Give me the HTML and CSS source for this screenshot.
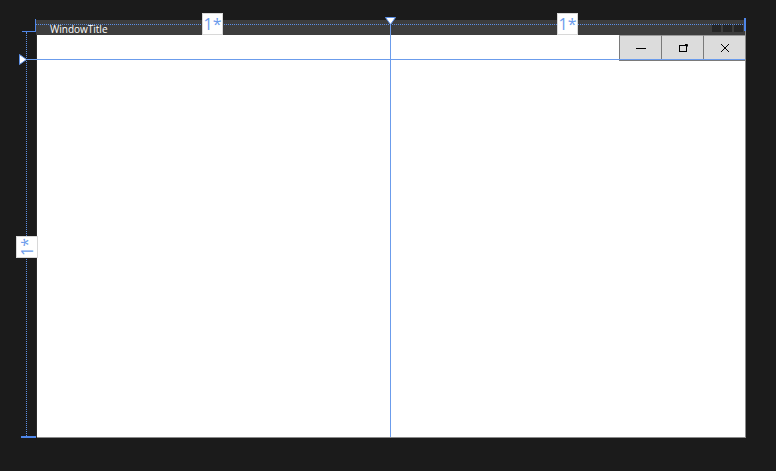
FILE: index.html
```html
<!DOCTYPE html>
<html>
  <head>
    <link rel="stylesheet" href="styles.css">
  </head>
  <body>
    <div class="surface">
      <div class="window">
        <div class="titlebar">
          <span class="title">WindowTitle</span>
          <div class="chrome-btns">
            <span></span><span></span><span></span>
          </div>
        </div>
        <div class="client">
          <div class="caption-btns">
            <div class="cbtn">
              <svg width="12" height="12" viewBox="0 0 12 12"><path d="M1 6.5h10" stroke="#000" stroke-width="1"/></svg>
            </div>
            <div class="cbtn">
              <svg width="12" height="12" viewBox="0 0 12 12"><rect x="2.5" y="3.5" width="7" height="6" fill="none" stroke="#000"/><path d="M8 2.5h2.5v2" fill="none" stroke="#000"/></svg>
            </div>
            <div class="cbtn">
              <svg width="12" height="12" viewBox="0 0 12 12"><path d="M2 2l8 8M10 2l-8 8" stroke="#000" stroke-width="1"/></svg>
            </div>
          </div>
        </div>
      </div>

      <!-- grid adorners -->
      <div class="rail-top"></div>
      <div class="rail-end"></div>
      <div class="rail-left"></div>
      <div class="tick-top"></div>
      <div class="tick-bottom"></div>
      <div class="corner"></div>
      <div class="col-line"></div>
      <div class="row-line"></div>
      <svg class="col-arrow" width="11" height="8" viewBox="0 0 11 8"><path d="M0.5 0.5h10L5.5 7.5z" fill="#fff" stroke="#5b8fe6"/></svg>
      <svg class="row-arrow" width="8" height="11" viewBox="0 0 8 11"><path d="M0.5 0.5v10L7.5 5.5z" fill="#fff" stroke="#5b8fe6"/></svg>
      <div class="size-tag col1">1*</div>
      <div class="size-tag col2">1*</div>
      <div class="size-tag row1"><span>1*</span></div>
    </div>
  </body>
</html>
```

FILE: styles.css
```css
html, body {
  margin: 0;
  padding: 0;
  background: #1b1b1b;
}

.surface {
  position: relative;
  width: 776px;
  height: 471px;
  overflow: hidden;
  padding: 20px 0 0 36px;
  box-sizing: border-box;
}

.window {
  width: 709px;
  height: 417px;
  display: flex;
  flex-direction: column;
  box-shadow: 1px 1px 0 #8a8a8a;
}

.titlebar {
  height: 15px;
  background: #3d3d3d;
  display: flex;
  align-items: flex-end;
  justify-content: space-between;
  font: 10px "Open Sans", "DejaVu Sans", sans-serif;
  color: #ffffff;
}

.title {
  padding-left: 14px;
  line-height: 12px;
}

.chrome-btns {
  display: flex;
  gap: 2px;
  padding: 0 2px 3px 0;
}

.chrome-btns span {
  width: 9px;
  height: 8px;
  background: #262626;
}

.client {
  flex: 1;
  background: #fff;
  border-left: 1px solid #2a2a2a;
  display: flex;
  justify-content: flex-end;
  align-items: flex-start;
}

.caption-btns {
  display: flex;
}

.cbtn {
  width: 41px;
  height: 24px;
  background: #dcdcdc;
  border: 1px solid #7a7a7a;
  border-top-color: #9a9a9a;
  display: flex;
  align-items: center;
  justify-content: center;
  margin-left: -1px;
}

.cbtn:last-child {
  border-right: none;
}

/* designer adorners */
.rail-top {
  position: absolute;
  left: 36px;
  top: 24px;
  width: 709px;
  border-top: 1px dotted #5b8fe6;
}

.rail-end {
  position: absolute;
  left: 744px;
  top: 18px;
  width: 2px;
  height: 13px;
  background: #4f86e8;
}

.corner {
  position: absolute;
  left: 35px;
  top: 19px;
  width: 1px;
  height: 12px;
  background: #4f86e8;
}

.tick-top {
  position: absolute;
  left: 22px;
  top: 31px;
  width: 14px;
  height: 1px;
  background: #4f86e8;
}

.tick-bottom {
  position: absolute;
  left: 21px;
  top: 436px;
  width: 15px;
  height: 2px;
  background: #4f86e8;
}

.rail-left {
  position: absolute;
  left: 26px;
  top: 32px;
  height: 404px;
  border-left: 1px dotted #5b8fe6;
}

.col-line {
  position: absolute;
  left: 390px;
  top: 22px;
  width: 1px;
  height: 415px;
  background: #6b9cec;
}

.row-line {
  position: absolute;
  left: 27px;
  top: 59px;
  width: 718px;
  height: 1px;
  background: #6b9cec;
}

.col-arrow {
  position: absolute;
  left: 385px;
  top: 17px;
}

.row-arrow {
  position: absolute;
  left: 19px;
  top: 54px;
}

.size-tag {
  position: absolute;
  background: #fff;
  color: #6b9cec;
  font: 16px "Open Sans", "DejaVu Sans", sans-serif;
  display: flex;
  align-items: center;
  justify-content: center;
  box-shadow: 0 0 0 1px #d8d8d8;
}

.col1 {
  left: 203px;
  top: 14px;
  width: 19px;
  height: 20px;
}

.col2 {
  left: 558px;
  top: 14px;
  width: 19px;
  height: 20px;
}

.row1 {
  left: 17px;
  top: 237px;
  width: 20px;
  height: 20px;
}

.row1 span {
  transform: rotate(-90deg);
}
```
